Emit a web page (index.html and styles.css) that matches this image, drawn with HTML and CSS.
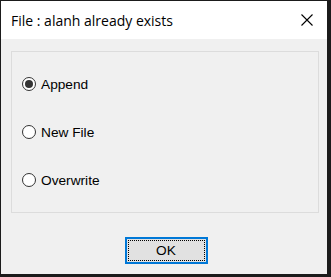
FILE: index.html
```html
<!DOCTYPE html>
<html>
<head>
<meta charset="utf-8">
<link rel="stylesheet" href="styles.css">
</head>
<body>
<div class="window">
  <div class="titlebar">
    <span class="title">File : alanh already exists</span>
    <svg class="close" width="12" height="12" viewBox="0 0 12 12"><path d="M0.5 0.5 L11.5 11.5 M11.5 0.5 L0.5 11.5" stroke="#000" stroke-width="1.1" fill="none"/></svg>
  </div>
  <div class="content">
    <div class="group">
      <label class="option"><span class="radio checked"></span><span>Append</span></label>
      <label class="option"><span class="radio"></span><span>New File</span></label>
      <label class="option"><span class="radio"></span><span>Overwrite</span></label>
    </div>
    <div class="actions">
      <div class="btn"><span class="focus">OK</span></div>
    </div>
  </div>
</div>
</body>
</html>
```
FILE: styles.css
```css
* { box-sizing: border-box; }
html, body {
  margin: 0;
  padding: 0;
  background: #1b1b1b;
  width: 331px;
  height: 277px;
  overflow: hidden;
}
.window {
  margin: 1px 4px 3px 1px;
  width: 326px;
  height: 273px;
  background: #f0f0f0;
  display: flex;
  flex-direction: column;
}
.titlebar {
  height: 38px;
  flex: none;
  background: #fff;
  display: flex;
  align-items: center;
  justify-content: space-between;
  padding: 0 14px 0 10px;
}
.title {
  font-family: "Open Sans", "Noto Sans", sans-serif;
  font-size: 14px;
  color: #000;
}
.close { display: block; }
.content {
  display: flex;
  flex-direction: column;
  padding: 12px 8px 0 10px;
}
.group {
  border: 1px solid #dcdcdc;
  height: 162px;
  padding: 8px 10px 0 10px;
  display: flex;
  flex-direction: column;
}
.option {
  height: 48px;
  flex: none;
  display: flex;
  align-items: center;
  gap: 5px;
  font-family: "Liberation Sans", Arial, sans-serif;
  font-size: 13.7px;
  color: #000;
}
.radio {
  width: 14px;
  height: 14px;
  border: 1px solid #333;
  border-radius: 50%;
  background: #fff;
  display: flex;
  align-items: center;
  justify-content: center;
}
.radio.checked::after {
  content: "";
  width: 8px;
  height: 8px;
  border-radius: 50%;
  background: #333;
}
.actions {
  display: flex;
  justify-content: center;
  padding-top: 24px;
  padding-left: 2px;
}
.btn {
  width: 83px;
  height: 27px;
  border: 2px solid #0078d7;
  background: #e1e1e1;
  display: flex;
  padding: 0;
}
.focus {
  flex: 1;
  margin: 1px;
  border: 1px dotted #000;
  display: flex;
  align-items: center;
  justify-content: center;
  font-family: "Liberation Sans", Arial, sans-serif;
  font-size: 13.7px;
  color: #000;
}
```
